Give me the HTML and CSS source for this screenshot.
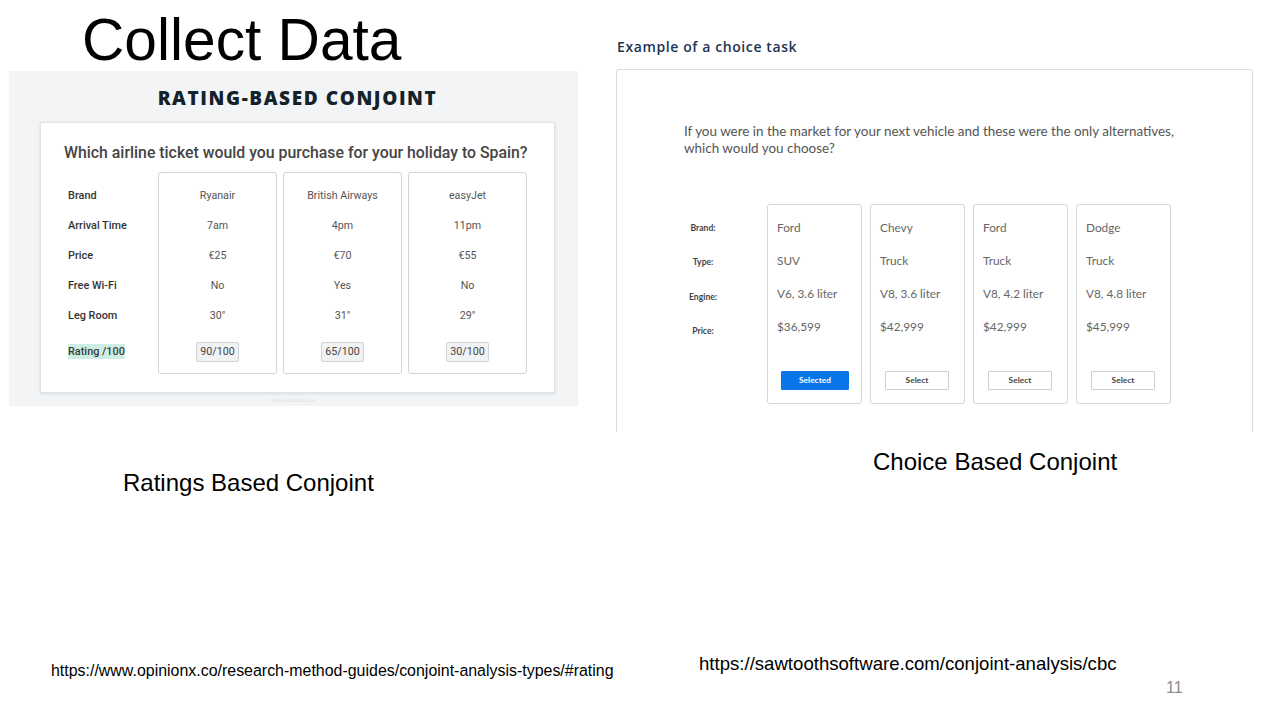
FILE: index.html
```html
<!DOCTYPE html>
<html>
<head>
<meta charset="utf-8">
<link rel="stylesheet" href="styles.css">
</head>
<body>
<div class="slide">
  <div class="col-left">
    <h1 class="title">Collect Data</h1>
    <div class="rb-panel">
      <div class="rb-head">RATING-BASED CONJOINT</div>
      <div class="rb-card">
        <div class="rb-q">Which airline ticket would you purchase for your holiday to Spain?</div>
        <div class="rb-grid">
          <div class="rb-labels">
            <div class="rb-row">Brand</div>
            <div class="rb-row">Arrival Time</div>
            <div class="rb-row">Price</div>
            <div class="rb-row">Free Wi-Fi</div>
            <div class="rb-row">Leg Room</div>
            <div class="rb-row rb-rating-row"><span class="hl">Rating /100</span></div>
          </div>
          <div class="rb-opt">
            <div class="rb-row">Ryanair</div>
            <div class="rb-row">7am</div>
            <div class="rb-row">€25</div>
            <div class="rb-row">No</div>
            <div class="rb-row">30″</div>
            <div class="rb-row rb-rating-row"><span class="rb-btn">90/100</span></div>
          </div>
          <div class="rb-opt">
            <div class="rb-row">British Airways</div>
            <div class="rb-row">4pm</div>
            <div class="rb-row">€70</div>
            <div class="rb-row">Yes</div>
            <div class="rb-row">31″</div>
            <div class="rb-row rb-rating-row"><span class="rb-btn">65/100</span></div>
          </div>
          <div class="rb-opt">
            <div class="rb-row">easyJet</div>
            <div class="rb-row">11pm</div>
            <div class="rb-row">€55</div>
            <div class="rb-row">No</div>
            <div class="rb-row">29″</div>
            <div class="rb-row rb-rating-row"><span class="rb-btn">30/100</span></div>
          </div>
        </div>
      </div>
      <div class="rb-mark">www.opinionx.co</div>
    </div>
    <div class="caption cap-left">Ratings Based Conjoint</div>
    <div class="url url-left">https://www.opinionx.co/research-method-guides/conjoint-analysis-types/#rating</div>
  </div>

  <div class="col-right">
    <div class="cb-title">Example of a choice task</div>
    <div class="cb-box">
      <p class="cb-q">If you were in the market for your next vehicle and these were the only alternatives,<br>which would you choose?</p>
      <div class="cb-grid">
        <div class="cb-labels">
          <div class="cb-lab">Brand:</div>
          <div class="cb-lab">Type:</div>
          <div class="cb-lab">Engine:</div>
          <div class="cb-lab">Price:</div>
        </div>
        <div class="cb-card">
          <div class="cb-val">Ford</div>
          <div class="cb-val">SUV</div>
          <div class="cb-val">V6, 3.6 liter</div>
          <div class="cb-val">$36,599</div>
          <div class="cb-btn cb-btn-on">Selected</div>
        </div>
        <div class="cb-card">
          <div class="cb-val">Chevy</div>
          <div class="cb-val">Truck</div>
          <div class="cb-val">V8, 3.6 liter</div>
          <div class="cb-val">$42,999</div>
          <div class="cb-btn">Select</div>
        </div>
        <div class="cb-card">
          <div class="cb-val">Ford</div>
          <div class="cb-val">Truck</div>
          <div class="cb-val">V8, 4.2 liter</div>
          <div class="cb-val">$42,999</div>
          <div class="cb-btn">Select</div>
        </div>
        <div class="cb-card">
          <div class="cb-val">Dodge</div>
          <div class="cb-val">Truck</div>
          <div class="cb-val">V8, 4.8 liter</div>
          <div class="cb-val">$45,999</div>
          <div class="cb-btn">Select</div>
        </div>
      </div>
    </div>
    <div class="caption cap-right">Choice Based Conjoint</div>
    <div class="url url-right">https://sawtoothsoftware.com/conjoint-analysis/cbc</div>
    <div class="slide-num">11</div>
  </div>
</div>
</body>
</html>
```

FILE: styles.css
```css
* { box-sizing: border-box; }
html, body { margin: 0; padding: 0; background: #ffffff; }
.slide {
  width: 1280px;
  height: 720px;
  overflow: hidden;
  display: flex;
  font-family: "Liberation Sans", Arial, sans-serif;
  color: #000;
}
.col-left {
  width: 616px;
  display: flex;
  flex-direction: column;
}
.col-right {
  flex: 1;
  display: flex;
  flex-direction: column;
}

/* Title */
.title {
  margin: 11px 0 0 82px;
  font-weight: 400;
  font-size: 58.67px;
  line-height: 58px;
  height: 60px;
}

/* Rating based panel */
.rb-panel {
  margin-left: 9px;
  width: 569px;
  height: 335px;
  background: #f3f4f6;
  display: flex;
  flex-direction: column;
  align-items: flex-start;
}
.rb-head {
  align-self: center;
  margin: 16px 0 0 8px;
  height: 22px;
  line-height: 22px;
  font-family: "Open Sans", sans-serif;
  font-weight: 800;
  font-size: 19px;
  letter-spacing: 1.6px;
  color: #14232b;
}
.rb-card {
  margin: 13px 0 0 31px;
  width: 515px;
  height: 271px;
  background: #ffffff;
  border: 1px solid #e0e3e6;
  box-shadow: 0 1px 3px rgba(0,0,0,0.10);
  padding: 20px 0 0 23px;
  font-family: Roboto, sans-serif;
}
.rb-q {
  font-size: 15.85px;
  font-weight: 500;
  color: #454545;
  height: 22px;
  line-height: 20px;
  white-space: nowrap;
}
.rb-grid {
  margin-top: 7px;
  display: flex;
  gap: 6px;
}
.rb-labels {
  width: 88px;
  padding: 9px 0 0 4px;
  font-size: 10.9px;
  font-weight: 500;
  color: #333;
}
.rb-opt {
  width: 119px;
  height: 202px;
  border: 1px solid #cdd4dc;
  border-radius: 3px;
  padding-top: 8px;
  font-size: 10.7px;
  color: #555;
  text-align: center;
}
.rb-row {
  height: 30px;
  line-height: 30px;
  white-space: nowrap;
}
.rb-rating-row { margin-top: 6px; }
.hl { background: #cdeee2; padding: 1px 0; color: #3a3a3a; }
.rb-btn {
  display: inline-block;
  height: 20px;
  line-height: 18px;
  padding: 0 3px;
  border: 1px solid #cfd3d8;
  border-radius: 2px;
  background: #f1f2f3;
  color: #444;
  font-size: 10.7px;
  vertical-align: middle;
}
.rb-mark {
  align-self: center;
  margin-top: 4px;
  font-family: "Open Sans", sans-serif;
  font-weight: 700;
  font-size: 5px;
  color: #e6e7e9;
}

/* captions & urls */
.caption {
  font-size: 24px;
  line-height: 28px;
}
.cap-left { margin: 63px 0 0 123px; }
.url { white-space: nowrap; }
.url-left {
  margin: 164px 0 0 51px;
  font-size: 15.95px;
  line-height: 20px;
}

/* Choice based */
.cb-title {
  margin-top: 37px;
  margin-left: 1px;
  height: 19px;
  line-height: 19px;
  font-family: "Open Sans", sans-serif;
  font-weight: 600;
  font-size: 14px;
  letter-spacing: 0.6px;
  color: #1c3553;
}
.cb-box {
  margin-top: 13px;
  width: 637px;
  height: 363px;
  border: 1px solid #dcdcdc;
  border-bottom: none;
  border-radius: 3px 3px 0 0;
  padding: 53px 0 0 67px;
  font-family: "Source Sans Pro", Lato, sans-serif;
}
.cb-q {
  margin: 0;
  font-size: 13.45px;
  line-height: 17px;
  color: #555;
  white-space: nowrap;
}
.cb-grid {
  margin-top: 47px;
  display: flex;
  gap: 8px;
}
.cb-labels {
  width: 75px;
  padding-top: 13px;
}
.cb-lab {
  width: 38px;
  height: 34.3px;
  line-height: 22px;
  text-align: center;
  font-size: 8.6px;
  font-weight: 700;
  color: #444;
}
.cb-card {
  width: 95px;
  height: 200px;
  border: 1px solid #d8d8d8;
  border-radius: 3px;
  box-shadow: 0 0 2px rgba(0,0,0,0.06);
  padding: 6px 0 0 9px;
  display: flex;
  flex-direction: column;
}
.cb-val {
  height: 33px;
  line-height: 33px;
  font-size: 11.8px;
  color: #666;
  white-space: nowrap;
}
.cb-btn {
  margin: 28px 0 0 5px;
  width: 64px;
  height: 19px;
  line-height: 17px;
  border: 1px solid #cfcfcf;
  border-radius: 1px;
  background: #fff;
  text-align: center;
  font-size: 8.4px;
  font-weight: 700;
  color: #444;
}
.cb-btn-on {
  width: 68px;
  margin-left: 4px;
  background: #0a75e8;
  border-color: #0a75e8;
  color: #fff;
}
.cap-right { margin: 16px 0 0 257px; }
.url-right {
  margin: 177px 0 0 83px;
  font-size: 18.6px;
  line-height: 22px;
}
.slide-num {
  margin: 3px 0 0 550px;
  font-size: 16px;
  line-height: 20px;
  color: #8a8a8a;
}
```
